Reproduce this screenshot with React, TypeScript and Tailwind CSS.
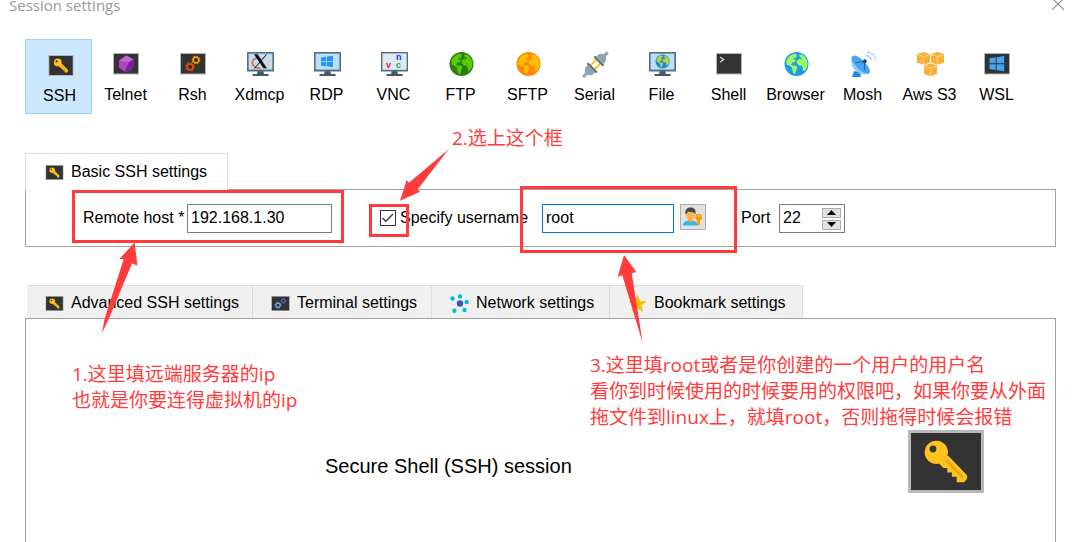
import * as React from "react"
import { clsx } from "clsx"

interface IconProps {
  className?: string
}

function Frame() {
  return <rect x="0.5" y="1.5" width="25" height="20.5" fill="#333" stroke="#b5b5b5" />
}

function Monitor({ children }: { children?: React.ReactNode }) {
  return (
    <>
      <path d="M11 18h5l1 4h4.5v2h-16v-2H10z" fill="#455a64" />
      <rect width="27" height="19.5" rx="0.6" fill="#546e7a" />
      <rect x="1.6" y="1.6" width="23.8" height="16" fill="#bbdefb" />
      {children}
    </>
  )
}

function Globe({ sea, land }: { sea: string; land: string }) {
  return (
    <>
      <circle cx="12" cy="12" r="12" fill={sea} />
      <path
        d="M2 8.5C3.6 4.8 6.4 2.6 10.4 1.6l2 1.6-.6 2.2-3 .8.8 1.6 2-.4-.8 2.4-2.8 1-1.6 2 2.2 1 2.6-.2 1.8 2-1.4 2.4-.6 3.4-1.6.6-1.4-3.4-.6-3.2-2.6-2-2.8-.8z"
        fill={land}
      />
      <path
        d="M14.4 2.4l3.4.4c2.8 1.8 4.6 4.2 5.2 7.4l-.4 4.6-2 3.6-1.8.8-.6-3.6-1-1.8-2.8-.4-2.4-2.6.8-2.6 2.2-1.4 1.8.4.6-1.2-2-.8z"
        fill={land}
      />
    </>
  )
}

function WindowsLogo({ fill }: { fill: string }) {
  return <path d="M0 2l5.5-.9v5H0zM6.3 1L13 0v6.1H6.3zM0 6.9h5.5v5L0 11zM6.3 6.9H13V13l-6.7-1z" fill={fill} />
}

function Gear({ x, y, r, color }: { x: number; y: number; r: number; color: string }) {
  return (
    <g transform={`translate(${x} ${y})`} fill="none" stroke={color}>
      <circle r={r} strokeWidth={r * 0.55} />
      <circle r={r * 1.38} strokeWidth={r * 0.42} strokeDasharray={`${r * 0.58} ${r * 0.503}`} />
    </g>
  )
}

function KeyIcon({ className }: IconProps) {
  return (
    <svg className={className} viewBox="0 0 76 63" aria-hidden="true">
      <rect width="76" height="63" fill="#b8b8b8" />
      <rect x="3" y="3" width="70" height="57" fill="#333" />
      <path d="M40 25.5L58.3 44.6q1.8 2.4 0 5.2l-2.2 2.5h-7.4v-5.6h-4.8v-4.3h-4.6V38h-4L31 33.6z" fill="#ffc31e" />
      <path d="M37.5 31.5l2-2 16.5 17.5-1.4 1.6z" fill="#e5a50a" />
      <circle cx="28.3" cy="22.3" r="11.6" fill="#ffc31e" />
      <circle cx="25" cy="19" r="3.4" fill="#333" />
    </svg>
  )
}

function GearsIcon({ className }: IconProps) {
  return (
    <svg className={className} viewBox="0 0 26 21" aria-hidden="true">
      <rect width="26" height="21" fill="#b0b0b0" />
      <rect x="1" y="1" width="24" height="19" fill="#333" />
      <Gear x={9.5} y={13} r={3} color="#64b5f6" />
      <Gear x={17} y={6.8} r={2.5} color="#5c6bc0" />
    </svg>
  )
}

function NetworkIcon({ className }: IconProps) {
  return (
    <svg className={className} viewBox="0 0 19 19" aria-hidden="true">
      <path
        d="M10 9.5L2.5 4.5M10 9.5V2M10 9.5l7-1.5M10 9.5l4.5 6.5M10 9.5L4.5 17"
        stroke="#c5e3ea"
        strokeWidth="0.8"
      />
      <circle cx="10" cy="9.5" r="3.2" fill="#3f51b5" />
      <g fill="#00bcd4">
        <circle cx="2.5" cy="4.5" r="2.2" />
        <circle cx="10" cy="2.4" r="2.2" />
        <circle cx="16.7" cy="8" r="2.2" />
        <circle cx="14.5" cy="16" r="2.2" />
        <circle cx="4.3" cy="16.8" r="2.2" />
      </g>
    </svg>
  )
}

function StarIcon({ className }: IconProps) {
  return (
    <svg className={className} viewBox="0 0 19 19" aria-hidden="true">
      <path d="M9.5.8l2.6 6 6.4.6-4.9 4.2 1.5 6.4-5.6-3.4L3.9 18l1.5-6.4L.5 7.4l6.4-.6z" fill="#f4c20d" />
    </svg>
  )
}

function UserKeyIcon({ className }: IconProps) {
  return (
    <svg className={className} viewBox="0 0 20 20" aria-hidden="true">
      <path d="M0 18.5c0-3.6 2.4-4.8 7.3-4.8s7.5 1.2 7.5 4.8z" fill="#29b6f6" />
      <path d="M5 11h5v3.6q-2.5 2.2-5 0z" fill="#f59a3c" />
      <path d="M3 5.5h9v3.2q-.8 4.6-4.5 4.6T3 8.7z" fill="#ffb74d" />
      <path d="M2.4 7.6C1.7 3 3.8.6 7.6.6s5.7 2.6 4.8 7l-1-1.9-6.2-.9z" fill="#4a4543" />
      <circle cx="15.6" cy="10.2" r="3.4" fill="#fb9a0b" />
      <circle cx="15.6" cy="9.2" r="0.9" fill="#e1e1e1" />
      <path d="M14.4 12.5H17v5.8h-2.6v-1.4h-1.3v-1.6h1.3z" fill="#fb9a0b" />
    </svg>
  )
}

function Cube({ x, y }: { x: number; y: number }) {
  return (
    <g transform={`translate(${x} ${y})`}>
      <path d="M6.5 0L13 2v8.6l-6.5 2.2L0 10.600V2z" fill="#fbb034" />
      <path d="M.4 2.600l6.100 2 6.100-2M6.500 4.600v7.800" fill="none" stroke="#fde3b4" strokeWidth="0.800" />
    </g>
  )
}

const sessions: { name: string; icon: React.ReactNode }[] = [
  { name: "SSH", icon: null },
  {
    name: "Telnet",
    icon: (
      <>
        <Frame />
        <path d="M13.5 3.5l6.800 3.700.6 6.400-4 5.400-5.300.8-5.700-4.300.2-7z" fill="#ab47bc" />
        <path d="M13.5 3.5l6.800 3.700-4.600 3.400-9.600-2.100z" fill="#c264d2" />
        <path d="M20.300 7.200l.6 6.400-4 5.400-5.300.8 4.100-9.200z" fill="#7b1fa2" />
      </>
    ),
  },
  {
    name: "Rsh",
    icon: (
      <>
        <Frame />
        <Gear x={10} y={14.8} r={3} color="#e65100" />
        <Gear x={16} y={8} r={2.7} color="#fb9a0b" />
      </>
    ),
  },
  {
    name: "Xdmcp",
    icon: (
      <Monitor>
        <path d="M11.5 5.5C7.5 6 5 8.5 5.4 11.4c.5 3 4.1 4.9 8.1 4.7" fill="none" stroke="#ef6c35" strokeWidth="1.8" />
        <path d="M17 4.5c4 1 5.3 4 4.2 7-.8 2.2-2.7 3.8-5.2 4.5" fill="none" stroke="#ffcc80" strokeWidth="1.6" />
        <path d="M7 2.3h3.6l9.4 14h-3.6z" fill="#111" />
        <path d="M19.5 2.3l-12 14.2" stroke="#111" />
      </Monitor>
    ),
  },
  {
    name: "RDP",
    icon: (
      <Monitor>
        <g transform="translate(7 3.7) scale(0.92 0.88)">
          <WindowsLogo fill="#2196f3" />
        </g>
      </Monitor>
    ),
  },
  {
    name: "VNC",
    icon: (
      <Monitor>
        <rect x="1.6" y="1.6" width="23.8" height="16" fill="#dcebfa" />
        <g className="font-['Liberation_Sans'] text-[9px] font-bold">
          <text x="5" y="16" fill="#e8202a">v</text>
          <text x="15" y="8" fill="#2a2af0">n</text>
          <text x="15" y="16" fill="#1fa43a">c</text>
        </g>
      </Monitor>
    ),
  },
  {
    name: "FTP",
    icon: (
      <g transform="translate(1.5 0)">
        <Globe sea="#2f7d0c" land="#57cc08" />
      </g>
    ),
  },
  {
    name: "SFTP",
    icon: (
      <g transform="translate(1.5 0)">
        <Globe sea="#ff8a00" land="#ffc107" />
      </g>
    ),
  },
  {
    name: "Serial",
    icon: (
      <g transform="translate(13.5 12.5) rotate(-45)">
        <path d="M-7-2.9H7M-7 2.9H7" stroke="#ffc107" strokeWidth="1.9" />
        <path d="M-4-6.3v12.600h-2.200V5c-3 .6-5.600-.5-6.800-3.400l-4.600-.1v-3l4.600-.1c1.200-2.900 3.800-4 6.800-3.400v-1.300z" fill="#90a4ae" />
        <path d="M4-6.3v12.600h2.200V5c3 .6 5.600-.5 6.800-3.400l4.200-.1v-3l-4.200-.1c-1.200-2.900-3.800-4-6.800-3.400v-1.300z" fill="#90a4ae" />
        <path d="M-4.6-6.5v13M4.6-6.5v13" stroke="#546e7a" strokeWidth="1.7" />
      </g>
    ),
  },
  {
    name: "File",
    icon: (
      <Monitor>
        <g transform="translate(6.5 2.4) scale(0.59)">
          <Globe sea="#1e88e5" land="#c0d430" />
        </g>
      </Monitor>
    ),
  },
  {
    name: "Shell",
    icon: (
      <>
        <Frame />
        <path d="M4 5l3.6 2.6L4 10.2" fill="none" stroke="#cfcfcf" strokeWidth="1.4" />
      </>
    ),
  },
  {
    name: "Browser",
    icon: (
      <g transform="translate(1.5 0)">
        <Globe sea="#2196f3" land="#9bff57" />
      </g>
    ),
  },
  {
    name: "Mosh",
    icon: (
      <>
        <path d="M4 19l6 1.5 1 4.500H2z" fill="#1e88e5" />
        <path d="M2.2 4.200C.2 9.500 1.5 15 5.500 18.700s9.300 4.800 13.800 2.300z" fill="#90caf9" />
        <ellipse cx="10.8" cy="12.7" rx="12" ry="4.7" transform="rotate(45 10.8 12.7)" fill="#42a5f5" />
        <path d="M5.5 10.5l9-1v8.500" fill="none" stroke="#455a64" strokeWidth="1.1" />
        <circle cx="14.8" cy="9.2" r="1.9" fill="#0d3c8c" />
        <path
          d="M16.5 3.5q4 .8 5 5M17.500 0q7 1.300 8.500 8.500"
          fill="none"
          stroke="#90caf9"
          strokeWidth="1.3"
          strokeDasharray="3 0.8"
        />
      </>
    ),
  },
  {
    name: "Aws S3",
    icon: (
      <>
        <Cube x={0} y={0} />
        <Cube x={14} y={0} />
        <Cube x={7} y={11.5} />
      </>
    ),
  },
  {
    name: "WSL",
    icon: (
      <>
        <Frame />
        <g transform="translate(5.5 4) scale(1.13 1.18)">
          <WindowsLogo fill="#42a5f5" />
        </g>
      </>
    ),
  },
]

const settingsTabs = [
  { name: "Advanced SSH settings", Icon: KeyIcon, width: "w-[226px]", iconClass: "h-[15px] w-[19px]" },
  { name: "Terminal settings", Icon: GearsIcon, width: "w-[179px]", iconClass: "h-[15px] w-[19px]" },
  { name: "Network settings", Icon: NetworkIcon, width: "w-[178px]", iconClass: "h-[19px] w-[19px]" },
  { name: "Bookmark settings", Icon: StarIcon, width: "w-[193px]", iconClass: "h-[19px] w-[19px]" },
]

function SessionToolbar({ active, onSelect }: { active: string; onSelect: (name: string) => void }) {
  return (
    <nav className="flex" aria-label="Session type">
      {sessions.map(({ name, icon }) => (
        <button
          key={name}
          type="button"
          onClick={() => onSelect(name)}
          className={clsx(
            "flex h-[75px] w-[67px] shrink-0 flex-col items-center border whitespace-nowrap",
            active === name ? "border-[#99d1ff] bg-[#cce8ff] pt-[13px] pl-0.5" : "border-transparent pt-3"
          )}
        >
          {icon ? (
            <svg className="h-[25px] w-[29px] overflow-visible" viewBox="-2 0 29 25" aria-hidden="true">
              {icon}
            </svg>
          ) : (
            <span className="flex h-[25px] w-[29px] justify-end pt-0.5">
              <KeyIcon className="h-[21px] w-[26px]" />
            </span>
          )}
          <span className="mt-2 leading-5">{name}</span>
        </button>
      ))}
    </nav>
  )
}

function BasicSettings() {
  const [host, setHost] = React.useState("192.168.1.30")
  const [specify, setSpecify] = React.useState(true)
  const [username, setUsername] = React.useState("root")
  const [port, setPort] = React.useState(22)

  return (
    <section>
      <div className="relative -mb-px flex">
        <button
          type="button"
          className="flex h-[37px] w-[203px] items-center gap-[7px] border border-b-0 border-[#dcdcdc] bg-white pl-[19px] whitespace-nowrap"
        >
          <KeyIcon className="h-[15px] w-[19px]" />
          Basic SSH settings
        </button>
      </div>
      <div className="flex h-[58px] items-start border border-[#a0a0a0] pt-3.5 pl-[57px] whitespace-nowrap">
        <label htmlFor="host" className="w-[104px] shrink-0 leading-7">
          Remote host *
        </label>
        <input
          id="host"
          value={host}
          onChange={(e) => setHost(e.target.value)}
          className="h-[29px] w-[145px] shrink-0 border border-[#7a7a7a] bg-white px-[3px] pb-0.5 outline-none"
        />
        <div className="ml-12 flex h-7 w-[162px] shrink-0 items-center gap-1">
          <span className="relative flex size-4 shrink-0">
            <input
              id="specify"
              type="checkbox"
              checked={specify}
              onChange={(e) => setSpecify(e.target.checked)}
              className="size-4 appearance-none border border-[#333] bg-white"
            />
            {specify && (
              <svg className="pointer-events-none absolute inset-0 size-4" viewBox="0 0 16 16" aria-hidden="true">
                <path d="M2.5 8l3.300 3.300L13 4" fill="none" stroke="#333" strokeWidth="1.3" />
              </svg>
            )}
          </span>
          <label htmlFor="specify">Specify username</label>
        </div>
        <input
          aria-label="Username"
          value={username}
          onChange={(e) => setUsername(e.target.value)}
          className="h-[29px] w-[132px] shrink-0 border border-[#0078d7] bg-white px-[3px] pb-0.5 outline-none"
        />
        <button
          type="button"
          aria-label="Manage users"
          className="ml-1.5 flex size-[26px] shrink-0 items-center justify-center border border-[#adadad] bg-[#e1e1e1]"
        >
          <UserKeyIcon className="size-5" />
        </button>
        <label htmlFor="port" className="ml-[35px] w-[38px] shrink-0 leading-7">
          Port
        </label>
        <div className="flex h-[29px] w-[66px] shrink-0 items-center border border-[#7a7a7a] pr-[3px]">
          <input
            id="port"
            inputMode="numeric"
            value={port}
            onChange={(e) => setPort(Number(e.target.value) || 0)}
            className="w-0 flex-1 pb-0.5 pl-[3px] outline-none"
          />
          <div className="flex flex-col gap-0.5">
            <button
              type="button"
              aria-label="Increase port"
              onClick={() => setPort(port + 1)}
              className="flex h-2.5 w-[19px] items-center justify-center border border-[#adadad] bg-[#e1e1e1]"
            >
              <svg className="h-[5px] w-[9px]" viewBox="0 0 9 5" aria-hidden="true">
                <path d="M4.5 0L9 5H0z" />
              </svg>
            </button>
            <button
              type="button"
              aria-label="Decrease port"
              onClick={() => setPort(port - 1)}
              className="flex h-2.5 w-[19px] items-center justify-center border border-[#adadad] bg-[#e1e1e1]"
            >
              <svg className="h-[5px] w-[9px]" viewBox="0 0 9 5" aria-hidden="true">
                <path d="M4.5 5L9 0H0z" />
              </svg>
            </button>
          </div>
        </div>
      </div>
    </section>
  )
}

// Hand-drawn notes pinned on top of the dialog
function Annotations() {
  return (
    <div className="pointer-events-none absolute inset-0 overflow-hidden font-['Open_Sans','Noto_Sans_CJK_SC',sans-serif] text-[19px] leading-[26px] whitespace-nowrap text-[#ff3b3b]">
      <div className="absolute top-[190px] left-[72px] h-[53px] w-[272px] border-[3px] border-[#ff3b3b]" />
      <div className="absolute top-[204px] left-[369px] h-[33px] w-10 border-[3px] border-[#ff3b3b]" />
      <div className="absolute top-[186px] left-[520px] h-[67px] w-[217px] border-[3px] border-[#ff3b3b]" />
      <svg className="absolute top-0 left-0 h-[542px] w-[1087px]" viewBox="0 0 1087 542" fill="#ff3b3b" aria-hidden="true">
        <path d="M134.7 242.5l2.6 23-5.3-2L108.3 320 102 333l2.300-13 19.400-61h-4.400z" />
        <path d="M448.7 149.3l-31.200 40.200 2.500 2.200-20 9 6.700-20.700 2.300 2.700z" />
        <path d="M624 255l12.300 17-4.600 1.300 11 69.700-20.400-67.700-4.600 1.400z" />
      </svg>
      <p className="absolute top-[125px] left-[452px]">2.选上这个框</p>
      <p className="absolute top-[361px] left-[72px]">
        1.这里填远端服务器的ip
        <br />
        也就是你要连得虚拟机的ip
      </p>
      <p className="absolute top-[352px] left-[590px]">
        3.这里填root或者是你创建的一个用户的用户名
        <br />
        看你到时候使用的时候要用的权限吧，如果你要从外面
        <br />
        拖文件到linux上，就填root，否则拖得时候会报错
      </p>
    </div>
  )
}

export default function App() {
  const [session, setSession] = React.useState("SSH")

  return (
    <div className="relative flex h-screen flex-col overflow-hidden bg-white font-['Liberation_Sans',Arial,sans-serif] text-base text-black">
      <header className="-mt-[7px] flex h-[46px] shrink-0 items-start justify-between pr-[23px] pl-[9px]">
        <h1 className="font-['Open_Sans',sans-serif] text-[15px] leading-6 text-[#999]">Session settings</h1>
        <button type="button" aria-label="Close" className="pt-[5px]">
          <svg className="size-3" viewBox="0 0 12 12" aria-hidden="true">
            <path d="M0 0l12 12M12 0L0 12" stroke="#888" strokeWidth="1.1" />
          </svg>
        </button>
      </header>

      <main className="flex flex-1 flex-col pr-[31px] pl-[25px]">
        <SessionToolbar active={session} onSelect={setSession} />

        <div className="mt-[39px]">
          <BasicSettings />
        </div>

        <section className="mt-[38px] flex flex-1 flex-col">
          <div className="flex pl-0.5">
            {settingsTabs.map(({ name, Icon, width, iconClass }) => (
              <button
                key={name}
                type="button"
                className={clsx(
                  "flex h-[33px] items-center gap-[7px] border-t border-r border-[#dcdcdc] bg-[#f0f0f0] pt-0.5 pl-[18px] whitespace-nowrap",
                  width
                )}
              >
                <Icon className={iconClass} />
                {name}
              </button>
            ))}
          </div>
          <div className="flex flex-1 items-start justify-between border border-b-0 border-[#a0a0a0] pt-[111px] pr-[71px] pl-[299px]">
            <p className="mt-[22px] text-xl leading-7">Secure Shell (SSH) session</p>
            <KeyIcon className="h-[63px] w-[76px]" />
          </div>
        </section>
      </main>

      <Annotations />
    </div>
  )
}
